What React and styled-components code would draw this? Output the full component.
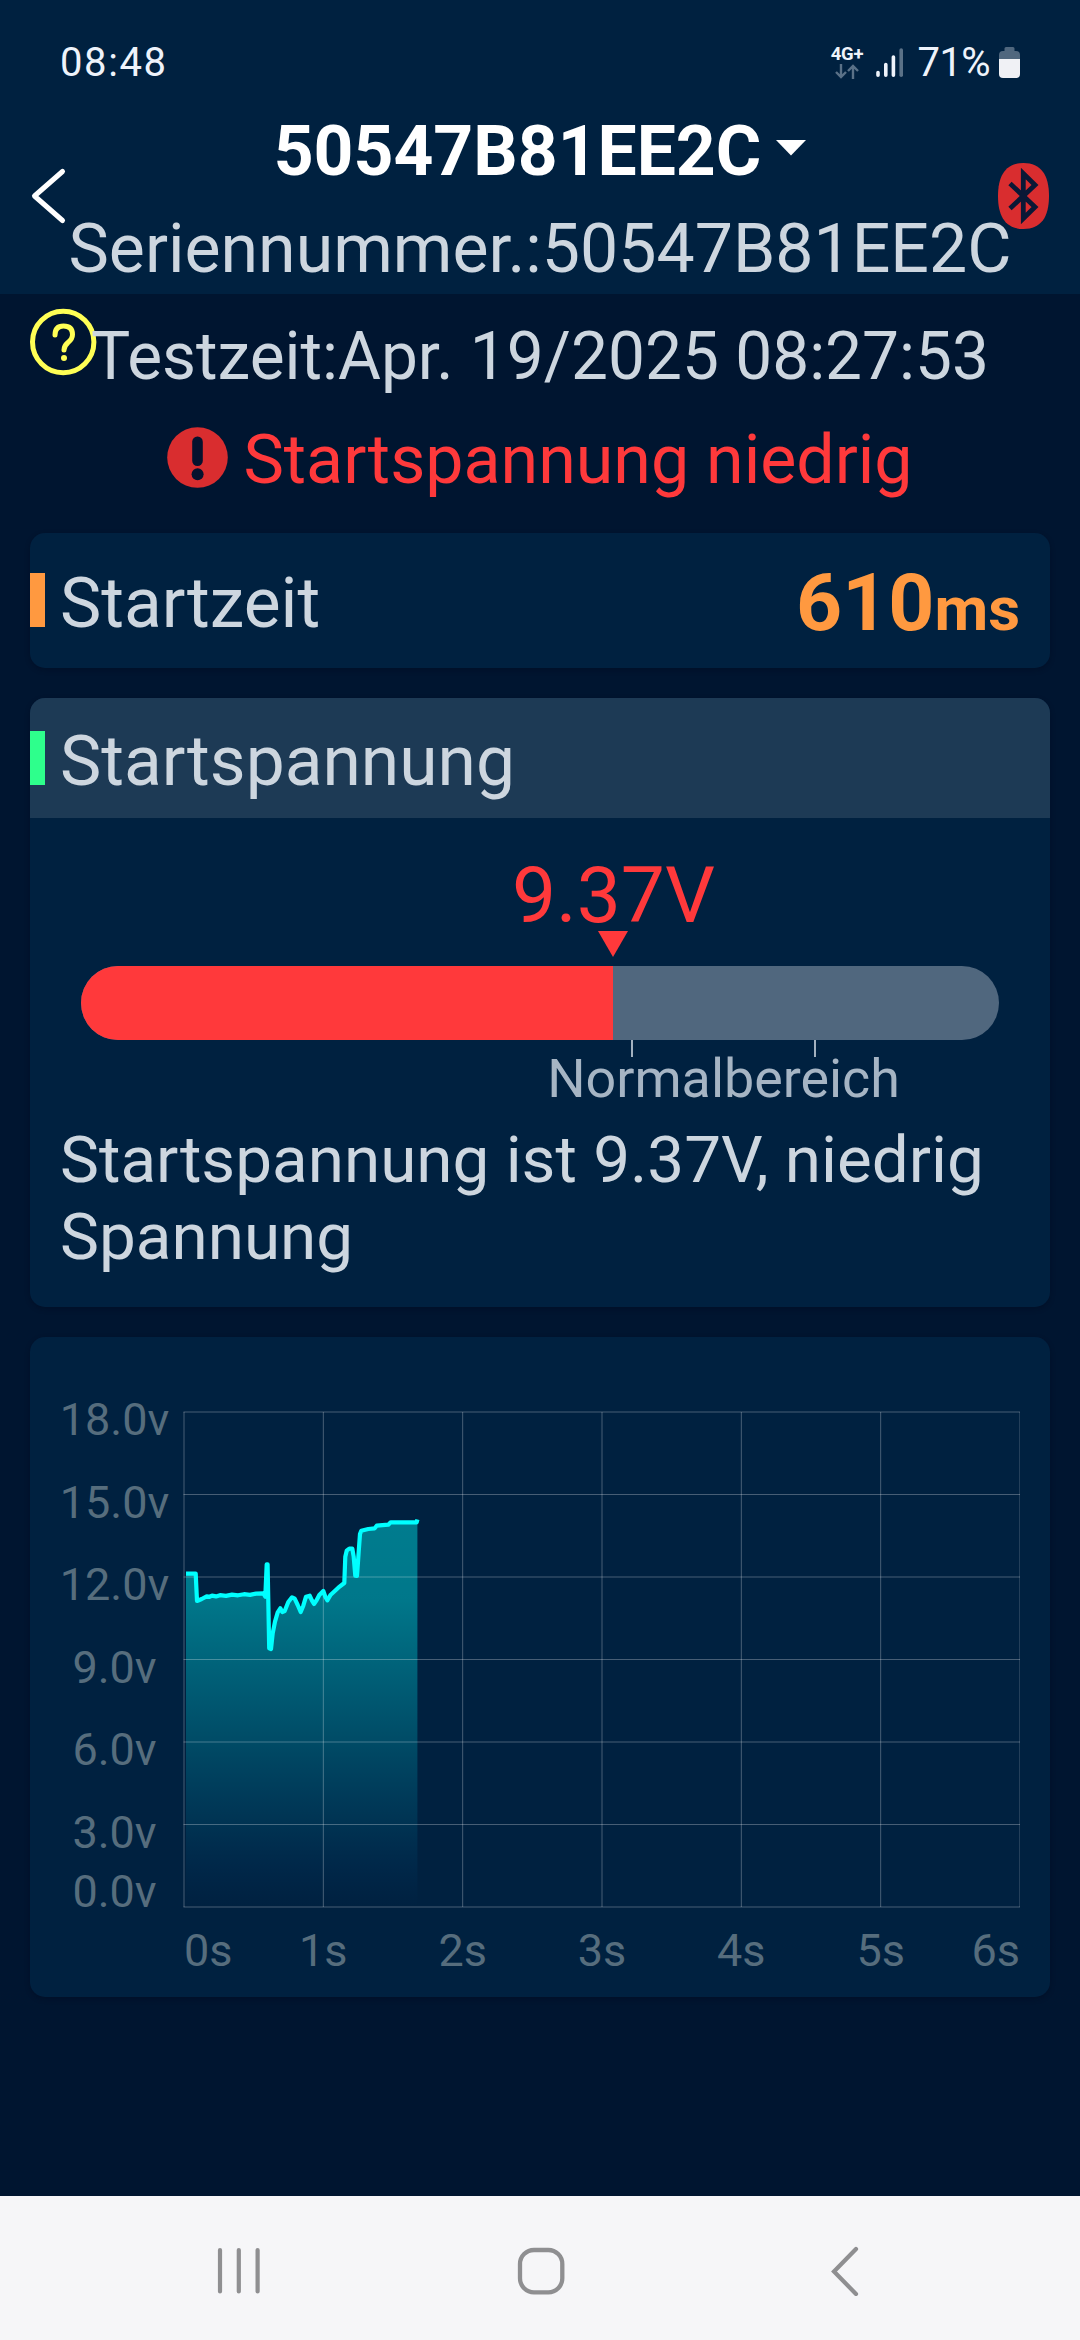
import React from "react";
import styled, { createGlobalStyle } from "styled-components";

const GlobalStyle = createGlobalStyle`
  html, body { margin: 0; padding: 0; background: #001530; }
  * { box-sizing: border-box; }
`;

const Screen = styled.div`
  width: 1080px;
  height: 2340px;
  display: flex;
  flex-direction: column;
  background: #001530;
  font-family: Roboto, "Liberation Sans", sans-serif;
  color: #cdd6df;
  overflow: hidden;
`;

const Header = styled.header`
  position: relative;
  height: 294px;
  flex: none;
  background: #002140;
  display: flex;
  flex-direction: column;
`;

const StatusBar = styled.div`
  height: 124px;
  padding: 1px 60px 0;
  display: flex;
  align-items: center;
  justify-content: space-between;
  color: #eef3fb;
  font-size: 40px;
  line-height: 48px;
`;

const Clock = styled.span`
  letter-spacing: 1.6px;
`;

const StatusIcons = styled.div`
  display: flex;
  align-items: center;
`;

const Network = styled.div`
  width: 33px;
  margin-right: 12px;
  display: flex;
  flex-direction: column;
  align-items: center;
  gap: 3px;
  font-size: 18.5px;
  font-weight: 700;
  line-height: 14px;
  letter-spacing: -0.2px;
`;

const Percent = styled.span`
  margin: 1px 9px 0 14px;
  letter-spacing: -0.6px;
`;

const TitleRow = styled.div`
  height: 55px;
  display: flex;
  align-items: center;
  justify-content: center;
  gap: 15px;
  color: #fff;
  font-size: 69.6px;
  font-weight: 700;
  line-height: 55px;
`;

const Caret = styled.svg`
  margin-bottom: 7px;
`;

const Serial = styled.div`
  height: 90px;
  margin-top: 25px;
  text-align: center;
  white-space: nowrap;
  font-size: 68px;
  line-height: 90px;
`;

const BackButton = styled.svg`
  position: absolute;
  left: 30px;
  top: 166px;
`;

const BluetoothBadge = styled.svg`
  position: absolute;
  left: 998px;
  top: 163px;
`;

const Content = styled.main`
  flex: 1;
  display: flex;
  flex-direction: column;
`;

const TestTime = styled.div`
  position: relative;
  height: 125px;
  text-align: center;
  white-space: nowrap;
  font-size: 65.8px;
  line-height: 125px;
`;

const TestTimeText = styled.span`
  position: relative;
`;

const HelpIcon = styled.svg`
  position: absolute;
  left: 29px;
  top: 14px;
`;

const Alert = styled.div`
  height: 83px;
  display: flex;
  align-items: center;
  justify-content: center;
  gap: 15px;
  color: #ff393b;
  font-size: 68.1px;
  line-height: 85px;
`;

const AlertIcon = styled.svg`
  margin-bottom: 7px;
`;

const Cards = styled.div`
  padding: 31px 30px 0;
  display: flex;
  flex-direction: column;
  gap: 30px;
`;

const Card = styled.section`
  padding-bottom: 1px;
  border-radius: 15px;
  background: #002140;
  overflow: hidden;
  box-shadow: 0 2px 5px rgba(0, 8, 25, 0.35);
`;

const CardHead = styled.div`
  height: ${(p) => p.$height}px;
  padding-right: 30px;
  display: flex;
  align-items: center;
  background: ${(p) => (p.$raised ? "#1d3a55" : "transparent")};
`;

const Marker = styled.span`
  width: 15px;
  height: 54px;
  background: ${(p) => p.$color};
`;

const CardTitle = styled.h2`
  flex: 1;
  margin: 0 0 0 15px;
  padding-top: 8px;
  font-size: 69.5px;
  font-weight: 400;
  line-height: 80px;
`;

const Value = styled.div`
  display: flex;
  align-items: baseline;
  padding-top: 12px;
  color: #ff9940;
  font-size: 80.4px;
  font-weight: 700;
  line-height: 90px;
`;

const Unit = styled.span`
  font-size: 62px;
`;

const Gauge = styled.div`
  padding: 41px 51px 0;
`;

const Reading = styled.div`
  width: 240px;
  margin-left: calc(${(p) => p.$at}% - 120px);
  display: flex;
  flex-direction: column;
  align-items: center;
  color: #ff393b;
  font-size: 78.5px;
  line-height: 72px;
`;

const Track = styled.div`
  height: 74px;
  margin-top: 9px;
  border-radius: 37px;
  background: #50677e;
  overflow: hidden;
`;

const Fill = styled.div`
  width: ${(p) => p.$percent}%;
  height: 100%;
  background: #ff393b;
`;

const NormalRange = styled.div`
  width: 185px;
  margin-left: 550px;
  display: flex;
  flex-direction: column;
  align-items: center;
`;

const Ticks = styled.div`
  width: 100%;
  height: 17px;
  border: solid #a3b1bf;
  border-width: 0 2px;
`;

const RangeLabel = styled.span`
  white-space: nowrap;
  color: #a6b5c4;
  font-size: 53.8px;
  line-height: 43px;
`;

const Verdict = styled.p`
  margin: 0;
  padding: 21px 30px 31px;
  font-size: 65.6px;
  line-height: 77px;
`;

const ChartCard = styled(Card)`
  height: 660px;
  padding: 41px 30px 0 30px;
  display: grid;
  grid-template-columns: 109px 14px 837px;
  grid-template-rows: 531.5px auto;
  color: #566d7d;
  font-size: 45px;
`;

const YAxis = styled.div`
  padding-top: 1px;
  display: flex;
  flex-direction: column;
  align-items: center;
`;

const YLabel = styled.span`
  height: ${(p) => (p.$last ? 36.5 : 82.5)}px;
  line-height: ${(p) => (p.$last ? 36.5 : 82.5)}px;
  white-space: nowrap;
`;

const Plot = styled.svg`
  grid-column: 3;
  margin-top: 33px;
`;

const XAxis = styled.div`
  grid-column: 3;
  padding: 11px 0 0 1px;
  display: grid;
  grid-template-columns: 1fr repeat(5, 2fr) 1fr;
  line-height: 60px;
  text-align: center;
`;

const XLabel = styled.span`
  text-align: ${(p) => p.$align};
`;

const NavBar = styled.footer`
  height: 144px;
  flex: none;
  padding: 5px 216px 0;
  display: flex;
  align-items: center;
  justify-content: space-between;
  background: #f6f6f8;
`;

const V_LABELS = ["18.0v", "15.0v", "12.0v", "9.0v", "6.0v", "3.0v", "0.0v"];
const T_LABELS = ["0s", "1s", "2s", "3s", "4s", "5s", "6s"];

const PLOT = { left: 1, top: 1, width: 836, height: 495 };

/* Voltage samples in plot pixels: x from the 0 s line, y down from the 18 V line. */
const SAMPLES = [
  [2, 161.7], [11.7, 161.7], [13, 189], [17.7, 187], [22.7, 184.3], [25, 185], [28, 183.6],
  [32, 184.4], [36, 183.2], [42, 183.9], [48, 182.6], [54, 183.3], [60, 182.2], [66, 182.9],
  [72, 181.6], [79.3, 181.3], [81.3, 184.7], [82.7, 152.3], [83.6, 152.3], [85.2, 236.3],
  [87, 237], [88.7, 221.3], [91, 209.7], [93.7, 200.3], [96.3, 196.3], [98.3, 200],
  [100.7, 199], [104.3, 190], [108, 185.3], [110.7, 186.7], [113.7, 193], [116.7, 200],
  [119.3, 193.7], [122, 184.7], [125.7, 183.7], [128, 188.7], [130, 192], [132.7, 188],
  [135.3, 183], [139.3, 179], [141.3, 184.7], [143.3, 188.3], [146.7, 182.7], [149.7, 180],
  [154.3, 175.7], [160.3, 171], [161.3, 144.7], [162.7, 138.7], [165.3, 136.7], [168.3, 136.7],
  [169.7, 144.7], [171.3, 163.7], [173, 164], [174.7, 139.7], [176, 122], [177.3, 118.7],
  [184.3, 117], [190.7, 116.3], [192.7, 113.7], [204.3, 112.7], [206.7, 110.3], [232.7, 110.3],
  [233.4, 107.5],
];

function VoltageChart() {
  const points = SAMPLES.map(([x, y]) => `${x},${y}`).join(" ");
  const lastX = SAMPLES[SAMPLES.length - 1][0];
  const firstX = SAMPLES[0][0];
  return (
    <Plot width="837" height="497" viewBox="0 0 837 497">
      <defs>
        <linearGradient id="area" gradientUnits="userSpaceOnUse" x1="0" y1="110" x2="0" y2="495">
          <stop offset="0" stopColor="#00ffff" stopOpacity="0.41" />
          <stop offset="0.2" stopColor="#00ffff" stopOpacity="0.39" />
          <stop offset="0.57" stopColor="#00f4ff" stopOpacity="0.2" />
          <stop offset="0.8" stopColor="#00d8ff" stopOpacity="0.09" />
          <stop offset="1" stopColor="#0080ff" stopOpacity="0" />
        </linearGradient>
      </defs>
      <g transform={`translate(${PLOT.left} ${PLOT.top})`}>
        <polygon points={`${firstX},495 ${points} ${lastX},495`} fill="url(#area)" />
        <g stroke="#ffffff" strokeOpacity="0.28" strokeWidth="1">
          {V_LABELS.map((label, i) => (
            <line key={label} x1="-0.5" x2={PLOT.width} y1={i * 82.5} y2={i * 82.5} />
          ))}
          {T_LABELS.map((label, i) => (
            <line
              key={label}
              x1={(i * PLOT.width) / 6}
              x2={(i * PLOT.width) / 6}
              y1="0"
              y2={PLOT.height}
            />
          ))}
        </g>
        <polyline
          points={points}
          fill="none"
          stroke="#00ffff"
          strokeWidth="4.2"
          strokeLinejoin="round"
        />
      </g>
    </Plot>
  );
}

export default function App() {
  const level = 58;
  return (
    <Screen>
      <GlobalStyle />
      <Header>
        <StatusBar>
          <Clock>08:48</Clock>
          <StatusIcons>
            <Network>
              4G+
              <svg width="24" height="15" viewBox="0 0 24 15" fill="none" stroke="#5a7187" strokeWidth="2.4">
                <path d="M6 0V13M1 8L6 13L11 8M18 15V2M13 7L18 2L23 7" />
              </svg>
            </Network>
            <svg width="28" height="31" viewBox="0 0 28 31" strokeWidth="3.6" strokeLinecap="round">
              <path d="M2 25.5V28.2M9.8 17.5V28.2M17.4 10V28.2" stroke="#eef3fb" />
              <path d="M25.2 3V28.2" stroke="#5a7187" />
            </svg>
            <Percent>71%</Percent>
            <svg width="21" height="31" viewBox="0 0 21 31">
              <path d="M5.5 4V1.5Q5.5 0 7 0H14Q15.5 0 15.5 1.5V4H17Q21 4 21 8V12H0V8Q0 4 4 4Z" fill="#50677e" />
              <path d="M0 12H21V27Q21 31 17 31H4Q0 31 0 27Z" fill="#f0f1f5" />
            </svg>
          </StatusIcons>
        </StatusBar>
        <TitleRow>
          50547B81EE2C
          <Caret width="30" height="16" viewBox="0 0 30 16">
            <path d="M0 0H30L15 15.5Z" fill="#fff" />
          </Caret>
        </TitleRow>
        <Serial>Seriennummer.:50547B81EE2C</Serial>
        <BackButton width="38" height="60" viewBox="0 0 38 60">
          <path
            d="M32.5 5.5L4.5 30L32.5 54.5"
            fill="none"
            stroke="#fff"
            strokeWidth="5"
            strokeLinecap="round"
            strokeLinejoin="round"
          />
        </BackButton>
        <BluetoothBadge width="51" height="66" viewBox="0 0 51 66">
          <path
            d="M25.5 0C43 0 51 12 51 33S43 66 25.5 66S0 54 0 33S8 0 25.5 0Z"
            fill="#d92d2f"
          />
          <path
            d="M12 20.5L37 44L25.3 55.5V10.5L37 22L12 45.5"
            fill="none"
            stroke="#0a1836"
            strokeWidth="4.8"
          />
        </BluetoothBadge>
      </Header>

      <Content>
        <TestTime>
          <HelpIcon width="68" height="68" viewBox="0 0 68 68" fill="none" stroke="#ffff55">
            <circle cx="34.2" cy="34" r="30.7" strokeWidth="5" />
            <path
              d="M26 27Q26 18 34.5 18Q43.5 18 43.5 26.5Q43.5 31 39 34.5Q35 38 35 42"
              strokeWidth="5"
              strokeLinecap="round"
            />
            <circle cx="35" cy="50" r="3" fill="#ffff55" stroke="none" />
          </HelpIcon>
          <TestTimeText>Testzeit:Apr. 19/2025 08:27:53</TestTimeText>
        </TestTime>
        <Alert>
          <AlertIcon width="61" height="61" viewBox="0 0 61 61">
            <circle cx="30.5" cy="30.5" r="30.3" fill="#d92d2f" />
            <rect x="25.2" y="9.5" width="10.6" height="29.5" rx="5.2" fill="#06122e" />
            <circle cx="30.6" cy="47.3" r="6" fill="#06122e" />
          </AlertIcon>
          <span>Startspannung niedrig</span>
        </Alert>

        <Cards>
          <Card>
            <CardHead $height={134}>
              <Marker $color="#ff9940" />
              <CardTitle>Startzeit</CardTitle>
              <Value>
                610<Unit>ms</Unit>
              </Value>
            </CardHead>
          </Card>

          <Card>
            <CardHead $height={120} $raised>
              <Marker $color="#2eff8c" />
              <CardTitle>Startspannung</CardTitle>
            </CardHead>
            <Gauge>
              <Reading $at={level}>
                9.37V
                <svg width="30" height="26" viewBox="0 0 30 26">
                  <path d="M0 0H30L15 26Z" fill="#ff393b" />
                </svg>
              </Reading>
              <Track>
                <Fill $percent={level} />
              </Track>
              <NormalRange>
                <Ticks />
                <RangeLabel>Normalbereich</RangeLabel>
              </NormalRange>
            </Gauge>
            <Verdict>Startspannung ist 9.37V, niedrig Spannung</Verdict>
          </Card>

          <ChartCard>
            <YAxis>
              {V_LABELS.map((label, i) => (
                <YLabel key={label} $last={i === V_LABELS.length - 1}>
                  {label}
                </YLabel>
              ))}
            </YAxis>
            <VoltageChart />
            <XAxis>
              {T_LABELS.map((label, i) => (
                <XLabel
                  key={label}
                  $align={i === 0 ? "left" : i === T_LABELS.length - 1 ? "right" : "center"}
                >
                  {label}
                </XLabel>
              ))}
            </XAxis>
          </ChartCard>
        </Cards>
      </Content>

      <NavBar>
        <svg width="46" height="50" viewBox="0 0 46 50" stroke="#8f8f91" strokeWidth="4.2" strokeLinecap="round">
          <path d="M4 4V45.5M22.8 4V45.5M41.6 4V45.5" />
        </svg>
        <svg width="50" height="50" viewBox="0 0 50 50" fill="none" stroke="#8f8f91" strokeWidth="4.3">
          <rect x="4" y="4" width="42.3" height="42.3" rx="14" />
        </svg>
        <svg
          width="44"
          height="50"
          viewBox="-10 0 44 50"
          fill="none"
          stroke="#8f8f91"
          strokeWidth="4.2"
          strokeLinecap="round"
          strokeLinejoin="miter"
        >
          <path d="M26 3L4 25.5L26 48" />
        </svg>
      </NavBar>
    </Screen>
  );
}
